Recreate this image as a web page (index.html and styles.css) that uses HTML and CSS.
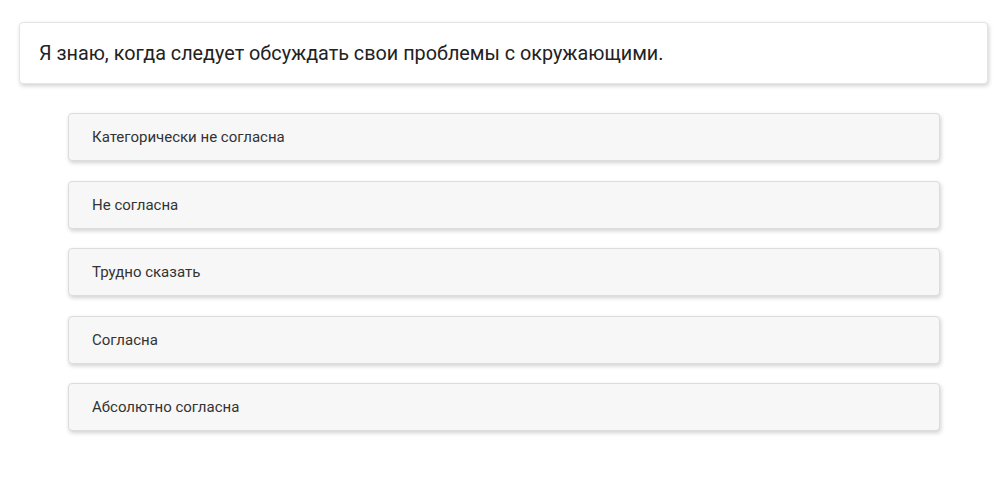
FILE: index.html
```html
<!DOCTYPE html>
<html lang="ru">
<head>
<meta charset="utf-8">
<link rel="stylesheet" href="styles.css">
</head>
<body>
<div class="page">
  <div class="question">Я знаю, когда следует обсуждать свои проблемы с окружающими.</div>
  <div class="options">
    <div class="option">Категорически не согласна</div>
    <div class="option">Не согласна</div>
    <div class="option">Трудно сказать</div>
    <div class="option">Согласна</div>
    <div class="option">Абсолютно согласна</div>
  </div>
</div>
</body>
</html>
```
FILE: styles.css
```css
html, body {
  margin: 0;
  padding: 0;
  background: #fff;
}
body {
  font-family: Roboto, "Liberation Sans", Arial, sans-serif;
  color: #222;
}
.page {
  padding: 22px 12px 40px 19px;
}
.question {
  box-sizing: border-box;
  height: 62px;
  display: flex;
  align-items: center;
  padding: 0 19px;
  font-size: 19.8px;
  color: #222;
  background: #fff;
  border: 1px solid #e4e4e4;
  border-radius: 4px;
  box-shadow: 1px 2px 4px rgba(0,0,0,0.18);
}
.options {
  margin: 29px 48px 0 49px;
  display: flex;
  flex-direction: column;
  gap: 19.5px;
}
.option {
  box-sizing: border-box;
  height: 48px;
  display: flex;
  align-items: center;
  padding: 0 23px;
  font-size: 15px;
  color: #333;
  background: #f7f7f7;
  border: 1px solid #dcdcdc;
  border-radius: 4px;
  box-shadow: 1px 2px 4px rgba(0,0,0,0.18);
}
```
